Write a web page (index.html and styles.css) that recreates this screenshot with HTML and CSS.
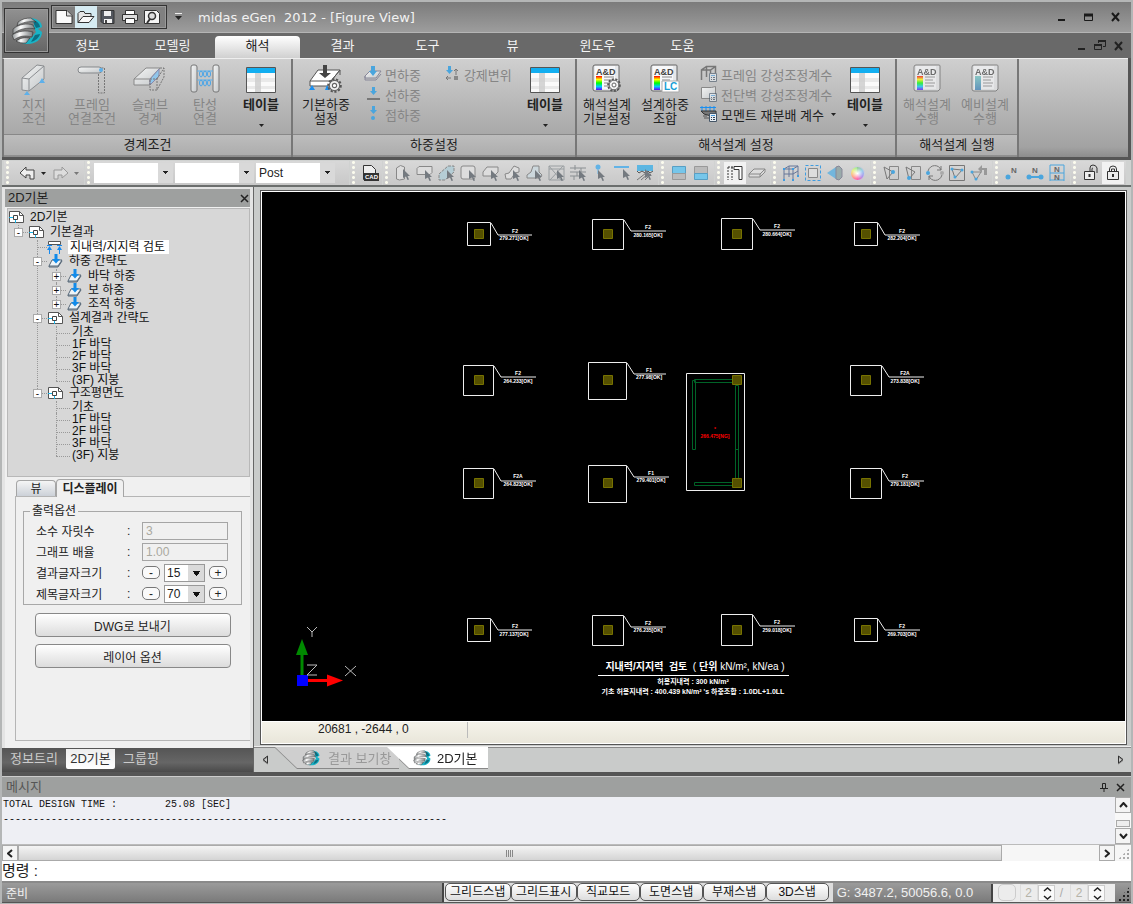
FILE: index.html
```html
<!DOCTYPE html>
<html lang="ko">
<head>
    <meta charset="utf-8">
    <title>midas eGen 2012 - [Figure View]</title>
    <link rel="stylesheet" href="styles.css">
</head>
<body>
    <!-- shared icons -->
    <svg class="defs" width="0" height="0">
        <linearGradient id="steel" x1="0" y1="0" x2="1" y2="1">
            <stop offset="0" stop-color="#f4f5f5"/><stop offset="1" stop-color="#c4c7c9"/>
        </linearGradient>
        <linearGradient id="band" x1="0" y1="0" x2="1" y2="0">
            <stop offset="0" stop-color="#8b9092"/><stop offset=".35" stop-color="#fff"/><stop offset="1" stop-color="#777c7e"/>
        </linearGradient>
        <linearGradient id="rainbow" x1="0" y1="0" x2="0" y2="1">
            <stop offset="0" stop-color="#f00"/><stop offset=".25" stop-color="#ff0"/><stop offset=".5" stop-color="#0f0"/><stop offset=".75" stop-color="#0cf"/><stop offset="1" stop-color="#60f"/>
        </linearGradient>
        <linearGradient id="teal" x1="0" y1="0" x2="0" y2="1">
            <stop offset="0" stop-color="#6fc6c4"/><stop offset="1" stop-color="#3c82bb"/>
        </linearGradient>
        <symbol id="logo" viewBox="0 0 32 28">
            <path d="M19 1c7 0 12 4 12 9l-4 2 4 3c0 7-6 12-14 12-4 0-7-1-9-3l12-3 5-6-3-6 2-3-8-3z" fill="#19b3c6"/>
            <path d="M22 3c4 1 7 4 7 7l-4 1-2-4zM29 17c-1 4-5 7-9 8l4-7z" fill="#0c6f83"/>
            <path d="M7 5c4-3 8-4 13-4l5 4C18 4 12 5 6 9z" fill="url(#band)" stroke="#333" stroke-width=".6"/>
            <path d="M2 12c6-5 14-6 20-4l2 4C16 10 8 12 2 17z" fill="url(#band)" stroke="#333" stroke-width=".6"/>
            <path d="M1 18c6-4 14-5 21-3l-1 5C14 18 8 19 3 23z" fill="url(#band)" stroke="#333" stroke-width=".6"/>
            <path d="M5 24c4-3 9-4 14-3l-4 5c-4 0-7 0-10-2z" fill="url(#band)" stroke="#333" stroke-width=".6"/>
        </symbol>
        <symbol id="table" viewBox="0 0 32 28">
            <path d="M1.500 1.500h29v25h-29z" fill="#fafafa" stroke="#555"/>
            <path d="M2 2h28v5H2z" fill="#12aef0"/>
            <path d="M2 12h28v4H2zM2 20h28v3H2z" fill="#e9e9e9"/>
            <path d="M10 7h6v19h-6z" fill="#ccc" opacity=".8"/>
        </symbol>
        <symbol id="gear" viewBox="0 0 14 14">
            <circle cx="7" cy="7" r="5.800" fill="none" stroke="#555" stroke-width="2" stroke-dasharray="2 1.500"/>
            <circle cx="7" cy="7" r="4.800" fill="#f2f2f2" stroke="#666"/>
            <circle cx="7" cy="7" r="2" fill="#fff" stroke="#666"/>
        </symbol>
        <symbol id="report" viewBox="0 0 28 28">
            <path d="M3 1h23q1 0 1 1v23l-2 2H3q-2 0-2-2V3q0-2 2-2z" fill="#e6e7e9" stroke="#666"/>
            <path d="M3 2h20v23H3z" fill="#f7f8fa"/>
            <path d="M12 13h10M12 16h8M12 19h10M12 22h9" stroke="#888" fill="none"/>
        </symbol>
        <symbol id="calc" viewBox="0 0 8 9">
            <path d="M.5.5h7v8h-7z" fill="#e8eef4" stroke="#456"/><path d="M2 2h4v1H2z" fill="#49d"/><path d="M2 4.500h1M4 4.500h2M2 6.500h1M4 6.500h2" stroke="#345"/>
        </symbol>
        <symbol id="plan" viewBox="0 0 15 12">
            <path d="M.5.5h10l4 4v7H.5z" fill="#fff" stroke="#555"/><path d="M10.500.5v4h4" fill="none" stroke="#555"/>
            <path d="M0 6.500h4M6.500 9v3" stroke="#1ab4e8"/><path d="M4.500 4.500h4v4h-4z" fill="#fff" stroke="#444"/>
        </symbol>
        <symbol id="load" viewBox="0 0 15 14">
            <path d="M4 6h10l-4 6H1z" fill="#eef4f8" stroke="#567"/><path d="M1 12v1h9l4-6" fill="none" stroke="#567"/>
            <path d="M6.500 0h3v5H12L8 9.500 4 5h2.500z" fill="#118bea"/>
        </symbol>
        <symbol id="cursor" viewBox="0 0 8 11">
            <path d="M0 0l7 7H4.500l1.500 3.500-1.500.5L3 7.500 0 9z" fill="#747a80"/>
        </symbol>
        <symbol id="down" viewBox="0 0 7 4"><path d="M0 0h7L3.500 4z" fill="#222"/></symbol>
    </svg>

    <header class="frame">
        <button class="app-button" aria-label="midas eGen"><svg width="32" height="28"><use href="#logo"/></svg></button>
        <div class="title-bar">
            <div class="quick">
                <button aria-label="New"><svg width="18" height="14"><path d="M1 .5h11l5 5v8H1z" fill="#fafafa" stroke="#333"/><path d="M11.500 1v5H17" fill="#ddd" stroke="#444"/></svg></button>
                <button class="on" aria-label="Open"><svg width="18" height="14"><path d="M1 12.500v-9l2-2h4l1 2h6v3" fill="#e5e5e5" stroke="#333"/><path d="M1 12.500l5-6h11l-5 6z" fill="#f8f8f8" stroke="#333"/></svg></button>
                <button aria-label="Save"><svg width="16" height="14"><path d="M1 .5h13v13H3l-2-2z" fill="#53575e" stroke="#333"/><path d="M4 1h7v5H4z" fill="#eee"/><path d="M4 9h8v4H4z" fill="#f4f4f4"/><path d="M5 10h2v3H5z" fill="#444"/></svg></button>
                <button aria-label="Print"><svg width="18" height="14"><path d="M4.500.5h9v4h-9z" fill="#fff" stroke="#333"/><path d="M1.500 4.500h15v6h-15z" fill="#ddd" stroke="#333"/><path d="M4.500 8.500h9v5h-9z" fill="#fff" stroke="#333"/></svg></button>
                <button aria-label="Preview"><svg width="18" height="14"><path d="M1.500.5h12l3 3v10h-15z" fill="#f4f4f4" stroke="#333"/><circle cx="9" cy="6" r="3.500" fill="#ddd" stroke="#333" stroke-width="1.500"/><path d="M7 9l-3 4" stroke="#333" stroke-width="2"/></svg></button>
            </div>
            <button class="more" aria-label="More"><svg width="7" height="8"><path d="M0 .5h7" stroke="#eee"/><path d="M0 3h7L3.500 7z" fill="#222"/></svg></button>
            <h1>midas eGen&nbsp; 2012 - [Figure View]</h1>
            <div class="window-buttons">
                <button aria-label="Minimize"><svg width="10" height="10"><path d="M1 8h7" stroke="#1a1a1a" stroke-width="2"/></svg></button>
                <button aria-label="Maximize"><svg width="10" height="10"><path d="M.5 2.500h8v6h-8z" fill="none" stroke="#1a1a1a"/><path d="M0 3h9" stroke="#1a1a1a" stroke-width="3"/></svg></button>
                <button aria-label="Close"><svg width="10" height="10"><path d="M1 1l7 8M8 1L1 9" stroke="#1a1a1a" stroke-width="2"/></svg></button>
            </div>
        </div>
        <nav class="menu">
            <a href="#">정보</a>
            <a href="#">모델링</a>
            <a href="#" class="on">해석</a>
            <a href="#">결과</a>
            <a href="#">도구</a>
            <a href="#">뷰</a>
            <a href="#">윈도우</a>
            <a href="#">도움</a>
            <div class="child-buttons">
                <button aria-label="Minimize view"><svg width="9" height="10"><path d="M1 8h7" stroke="#222" stroke-width="2"/></svg></button>
                <button aria-label="Restore view"><svg width="12" height="11"><path d="M4.500 3V.5h7v6H9" fill="none" stroke="#222"/><path d="M.5 4.500h7v5h-7z" fill="none" stroke="#222"/><path d="M4 1h8M0 5h8" stroke="#222" stroke-width="2"/></svg></button>
                <button aria-label="Close view"><svg width="10" height="10"><path d="M1 1l7 8M8 1L1 9" stroke="#222" stroke-width="2"/></svg></button>
            </div>
        </nav>
    </header>

    <div class="ribbon">
        <section class="group boundary">
            <div class="items">
                <button class="big" disabled><svg width="28" height="32"><path d="M2 14L17 1l7 1v13L9 27l-7-1z" fill="url(#steel)" stroke="#8a8d90"/><path d="M2 14l7 1v12M9 15L24 2" fill="none" stroke="#8a8d90"/><path d="M7 27l3 4H4zM22 14l3 5h-6z" fill="#5eb0ea"/></svg><span>지지<br>조건</span></button>
                <button class="big" disabled><svg width="30" height="32"><path d="M21.500 4v25h6V4z" fill="none" stroke="#777" stroke-dasharray="2 1"/><rect x="1" y="3" width="24" height="6" rx="3" fill="url(#steel)" stroke="#85888b"/><circle cx="24" cy="6" r="2" fill="#5eb0ea"/></svg><span>프레임<br>연결조건</span></button>
                <button class="big" disabled><svg width="34" height="32"><path d="M1 15L13 4h14L17 15v6H1z" fill="url(#steel)" stroke="#888"/><path d="M1 15h16" stroke="#888"/><path d="M17 15l9-10v7l-9 9z" fill="#8fc5ea" stroke="#88a"/><path d="M17 15h7v11h-7zM24 15l7-11v9l-7 13M27 4h4" fill="none" stroke="#777" stroke-dasharray="2 1"/></svg><span>슬래브<br>경계</span></button>
                <button class="big narrow" disabled><svg width="30" height="32"><rect x="1" y="1" width="6" height="27" rx="2" fill="url(#steel)" stroke="#777"/><rect x="23" y="1" width="6" height="27" rx="2" fill="url(#steel)" stroke="#777"/><path d="M7 7h16M7 16h16" stroke="#5eb0ea"/><g fill="none" stroke="#4aa5e8"><ellipse cx="11" cy="10" rx="1.500" ry="3"/><ellipse cx="15" cy="10" rx="1.500" ry="3"/><ellipse cx="19" cy="10" rx="1.500" ry="3"/><ellipse cx="11" cy="19" rx="1.500" ry="3"/><ellipse cx="15" cy="19" rx="1.500" ry="3"/><ellipse cx="19" cy="19" rx="1.500" ry="3"/></g></svg><span>탄성<br>연결</span></button>
                <button class="big strong"><svg width="32" height="32"><use href="#table" y="2" width="32" height="28"/></svg><span>테이블</span><svg class="arrow" width="5" height="3"><use href="#down"/></svg></button>
            </div>
            <h2>경계조건</h2>
        </section>
        <section class="group loads">
            <div class="items">
                <button class="big"><svg width="34" height="32"><path d="M1 17L9 6h22l-9 11v5H1z" fill="#fff" stroke="#555"/><path d="M1 17h21L31 6v5" fill="none" stroke="#555"/><path d="M3 21l3 5H0zM18 21l3 5h-5z" fill="#1a8ff0"/><path d="M14 1h4v8h4l-6 5-6-5h4z" fill="#444"/><use href="#gear" x="18" y="14" width="15" height="15"/></svg><span>기본하중<br>설정</span></button>
                <div class="stack">
                    <button disabled><svg width="18" height="16"><path d="M1 10l5-5h11l-5 7H1z" fill="url(#steel)" stroke="#889"/><path d="M1 10v4h11l5-6" fill="none" stroke="#889"/><path d="M7 0h4v5h2l-4 5-4-5h2z" fill="#4aa5dd"/></svg>면하중</button>
                    <button disabled><svg width="18" height="16"><path d="M8 1h3v4h2l-3.500 4L6 5h2z" fill="#4aa5dd"/><path d="M3 13h13" stroke="#777" stroke-width="2"/></svg>선하중</button>
                    <button disabled><svg width="18" height="16"><path d="M8 0h3v4h2l-3.500 4L6 4h2z" fill="#4aa5dd"/><circle cx="9" cy="12" r="2" fill="#4aa5dd"/></svg>점하중</button>
                </div>
                <div class="stack second">
                    <button disabled><svg width="16" height="16"><path d="M3 0h3v4h2L4.500 8 1 4h2z" fill="#4aa5dd"/><path d="M1 12h5M3 10l-2 2 2 2M11 3v6M9 5l2-2 2 2" fill="none" stroke="#777"/><path d="M9 10h4v4H9z" fill="#888"/></svg>강제변위</button>
                </div>
                <button class="big strong"><svg width="32" height="32"><use href="#table" y="2" width="32" height="28"/></svg><span>테이블</span><svg class="arrow" width="5" height="3"><use href="#down"/></svg></button>
            </div>
            <h2>하중설정</h2>
        </section>
        <section class="group design">
            <div class="items">
                <button class="big"><svg width="30" height="32"><use href="#report" width="28" height="28"/><text x="4" y="11" class="icon-label">A&amp;D</text><path d="M4 12h6v14H4z" fill="url(#rainbow)"/><use href="#gear" x="15" y="14" width="14" height="14"/></svg><span>해석설계<br>기본설정</span></button>
                <button class="big"><svg width="30" height="32"><use href="#report" width="28" height="28"/><text x="4" y="11" class="icon-label">A&amp;D</text><path d="M4 12h6v14H4z" fill="url(#rainbow)"/><path d="M12 17h17v11H12z" fill="#fff" stroke="#aaa"/><text x="14" y="26" class="lc-label">LC</text></svg><span>설계하중<br>조합</span></button>
                <div class="stack wide">
                    <button disabled><svg width="18" height="18"><path d="M1.500 15V5l5-3.500h9V8M1.500 5h9l5-3.500M6.500 1.500V12M10.500 5v3" fill="none" stroke="#777" stroke-width="1.500"/><use href="#calc" x="9" y="8" width="8" height="9" opacity=".6"/></svg>프레임 강성조정계수</button>
                    <button disabled><svg width="18" height="18"><path d="M1.500 2.500h10l4-1v12h-14z" fill="url(#steel)" stroke="#888"/><use href="#calc" x="9" y="8" width="8" height="9" opacity=".6"/></svg>전단벽 강성조정계수</button>
                    <button><svg width="18" height="18"><path d="M2 1v5M6 1v5M10 1v5M14 1v5M0 2.500h16" stroke="#1a8ff0"/><path d="M1 6h15v3l-5 2L4 9z" fill="#777" stroke="#333"/><path d="M3 11h4M4 13h5" stroke="#555"/><use href="#calc" x="9" y="8" width="8" height="9"/></svg>모멘트 재분배 계수<svg class="arrow" width="5" height="3"><use href="#down"/></svg></button>
                </div>
                <button class="big strong"><svg width="32" height="32"><use href="#table" y="2" width="32" height="28"/></svg><span>테이블</span><svg class="arrow" width="5" height="3"><use href="#down"/></svg></button>
            </div>
            <h2>해석설계 설정</h2>
        </section>
        <section class="group run">
            <div class="items">
                <button class="big" disabled><svg width="28" height="32"><g opacity=".7"><use href="#report" width="28" height="28"/><text x="4" y="11" class="icon-label">A&amp;D</text><path d="M4 12h6v14H4z" fill="url(#rainbow)"/></g></svg><span>해석설계<br>수행</span></button>
                <button class="big" disabled><svg width="28" height="32"><g opacity=".7"><use href="#report" width="28" height="28"/><text x="4" y="11" class="icon-label">A&amp;D</text><path d="M4 12h6v14H4z" fill="url(#teal)"/></g></svg><span>예비설계<br>수행</span></button>
            </div>
            <h2>해석설계 실행</h2>
        </section>
    </div>

    <div class="toolbar">
        <div class="tools history">
            <button aria-label="Undo"><svg width="17" height="14"><path d="M1 7l6-6v3h8v9h-4V9H7v3z" fill="#eee" stroke="#444"/></svg></button>
            <svg width="5" height="3"><use href="#down"/></svg>
            <button aria-label="Redo"><svg width="17" height="14"><path d="M16 7l-6-6v3H2v9h4V9h4v3z" fill="#ddd" stroke="#999"/></svg></button>
            <svg width="5" height="3" opacity=".5"><use href="#down"/></svg>
        </div>
        <div class="tools combos">
            <select aria-label="Case"><option></option></select>
            <select aria-label="Combination"><option></option></select>
            <select aria-label="Mode"><option>Post</option></select>
        </div>
        <div class="tools cad">
            <button aria-label="CAD"><svg width="18" height="18"><path d="M2.500 1.500h8l4 4v10h-12z" fill="#eee" stroke="#333"/><path d="M3 9h15v8H3z" fill="#333"/><text x="4" y="15" class="cad-label">CAD</text></svg></button>
        </div>
        <div class="tools">
            <button aria-label="Select column"><svg width="18" height="18"><path d="M2.500 4l4-2.500 4 1.500v12l-5 1-3-1z" fill="#ddd" stroke="#888"/><use href="#cursor" x="9" y="5" width="8" height="11"/></svg></button>
            <button aria-label="Select beam"><svg width="18" height="18"><path d="M1 4.500l2-2h13v6l-2 2H1z" fill="#ddd" stroke="#888"/><use href="#cursor" x="9" y="6" width="8" height="11"/></svg></button>
            <button aria-label="Select wall"><svg width="18" height="18"><path d="M1 10l9-8h6v6l-9 8H1z" fill="#b5cdd5" stroke="#888" stroke-dasharray="3 1"/><use href="#cursor" x="9" y="6" width="8" height="11"/></svg></button>
            <button aria-label="Select plate"><svg width="18" height="18"><rect x="1" y="2" width="14" height="13" rx="2" fill="#ddd" stroke="#888"/><use href="#cursor" x="9" y="6" width="8" height="11"/></svg></button>
            <button aria-label="Select slab"><svg width="18" height="18"><path d="M1 8l4-5h11v5l-4 4H1z" fill="#ddd" stroke="#888"/><use href="#cursor" x="9" y="6" width="8" height="11"/></svg></button>
            <button aria-label="Select stair"><svg width="18" height="18"><path d="M1 10l4-1 5-7 5 2v4l-4 1-4 6H2z" fill="#ddd" stroke="#888"/><use href="#cursor" x="9" y="6" width="8" height="11"/></svg></button>
            <button aria-label="Select footing"><svg width="18" height="18"><path d="M1 11l4-3 2-6h6v6l3 3-2 3H1z" fill="#ccd7dc" stroke="#888"/><use href="#cursor" x="9" y="6" width="8" height="11"/></svg></button>
            <button aria-label="Select brace"><svg width="18" height="18"><path d="M1 2h15v14H1zM1 2l12 14M15 2L2 16M1 5h15" fill="none" stroke="#999ea1"/><use href="#cursor" x="9" y="6" width="8" height="11"/></svg></button>
            <button aria-label="Select lines"><svg width="18" height="18"><path d="M0 4h16M0 8h16M0 12h10M5 1v5M11 4v4M7 8v4M4 12v4" fill="none" stroke="#8a8f92"/><use href="#cursor" x="9" y="6" width="8" height="11"/></svg></button>
            <button aria-label="Select node"><svg width="18" height="18"><circle cx="6" cy="3" r="2.500" fill="#62b3e6"/><path d="M6 5v5" stroke="#62b3e6"/><use href="#cursor" x="6" y="6" width="8" height="11"/></svg></button>
            <button aria-label="Select edge"><svg width="18" height="18"><path d="M0 3h15" stroke="#62b3e6" stroke-width="2"/><use href="#cursor" x="9" y="5" width="8" height="11"/></svg></button>
            <button aria-label="Select soil"><svg width="18" height="18"><path d="M1 1h16v6H1z" fill="#5cb6e2"/><path d="M1 7l2 2 3-2 3 2 3-2 2 2 3-2" stroke="#555" fill="none"/><path d="M1 16L10 9M5 16l8-7M9 16l6-6" stroke="#777"/><use href="#cursor" x="9" y="5" width="8" height="11"/></svg></button>
        </div>
        <div class="tools">
            <button aria-label="Top half"><svg width="16" height="16"><path d="M1.500 1.500h13v7h-13z" fill="#76c6ea" stroke="#579fc4"/><path d="M1.500 8.500h13v6h-13z" fill="#bbb" stroke="#999"/></svg></button>
            <button aria-label="Bottom half"><svg width="16" height="16"><path d="M1.500 1.500h13v7h-13z" fill="#bbb" stroke="#999"/><path d="M1.500 8.500h13v6h-13z" fill="#76c6ea" stroke="#579fc4"/></svg></button>
        </div>
        <div class="tools">
            <button class="on" aria-label="Frame"><svg width="18" height="18"><path d="M2 3v13M6 3v13M2 3h9" fill="none" stroke="#333" stroke-dasharray="2 1"/><path d="M8 2.500h8v13h-3v-10H8z" fill="#fff" stroke="#333"/></svg></button>
            <button aria-label="Slab"><svg width="18" height="18"><path d="M1 10l5-5h11l-5 5zM1 10v3h11v-3M12 13l5-5V5" fill="#ddd" stroke="#888"/></svg></button>
        </div>
        <div class="tools">
            <button aria-label="Model"><svg width="18" height="18"><path d="M2 16V5l5-3h9v10M2 5h9v11M11 5l5-3M7 2v11M2 10h9l5-3" fill="none" stroke="#679"/><path d="M1 15h2v2H1zM10 15h2v2h-2zM15 11h2v2h-2zM1 4h2v2H1zM10 4h2v2h-2z" fill="#3f9ce0"/></svg></button>
            <button aria-label="Fit"><svg width="18" height="18"><path d="M4.500 4.500h9v9h-9z" fill="#ddd" stroke="#888"/><path d="M1.500 1.500h15v15h-15z" fill="none" stroke="#3f9ce0" stroke-dasharray="3 2"/></svg></button>
            <button aria-label="Perspective"><svg width="18" height="18"><path d="M1 9l9-6v12z" fill="#72b6dd"/><path d="M10 3l3-1 3 3v8l-3 3-3-1z" fill="#9aa" stroke="#889"/></svg></button>
            <button aria-label="Colour"><span class="colour-wheel"></span></button>
        </div>
        <div class="tools">
            <button aria-label="Copy in"><svg width="18" height="18"><path d="M7.500 2.500h9v13h-9z" fill="none" stroke="#888"/><path d="M2 3l3 12L11 8z" fill="none" stroke="#777"/><circle cx="11" cy="8" r="2" fill="#4aa5dd"/></svg></button>
            <button aria-label="Copy out"><svg width="18" height="18"><path d="M7.500 2.500h9v13h-9z" fill="none" stroke="#888"/><path d="M2 3l3 12L11 8z" fill="none" stroke="#777"/><circle cx="5" cy="14" r="2" fill="#4aa5dd"/></svg></button>
            <button aria-label="Swap"><svg width="18" height="18"><path d="M2 7c2-7 11-7 13-1M16 11c-2 7-11 7-13 1M15 2v4h-4M3 16v-4h4" fill="none" stroke="#777"/><circle cx="2" cy="9" r="2" fill="#4aa5dd"/><circle cx="16" cy="9" r="2" fill="#aaa"/></svg></button>
            <button aria-label="Box"><svg width="18" height="18"><path d="M1.500 1.500h15v15h-15z" fill="none" stroke="#777"/><path d="M4 5l3 9 7-8z" fill="none" stroke="#777"/><circle cx="4" cy="5" r="1.500" fill="#4aa5dd"/><circle cx="7" cy="13" r="1.500" fill="#4aa5dd"/><circle cx="14" cy="6" r="1.500" fill="#4aa5dd"/></svg></button>
            <button aria-label="Return"><svg width="18" height="18"><path d="M2 8l4 8 5-8z" fill="none" stroke="#888"/><circle cx="2" cy="8" r="1.500" fill="#4aa5dd"/><circle cx="6" cy="15" r="1.500" fill="#4aa5dd"/><path d="M8 5l4-4v3h5v7h-3V6h-2v3z" fill="#999"/></svg></button>
        </div>
        <div class="tools">
            <button aria-label="Node number"><svg width="18" height="18"><circle cx="4" cy="13" r="2.500" fill="#4aa5dd"/><text x="7" y="9" class="n-label">N</text></svg></button>
            <button aria-label="Element number"><svg width="18" height="18"><path d="M3 13h12" stroke="#4aa5dd" stroke-width="2"/><circle cx="3" cy="13" r="2.500" fill="#4aa5dd"/><circle cx="15" cy="13" r="2.500" fill="#4aa5dd"/><text x="6" y="9" class="n-label">N</text></svg></button>
            <button aria-label="Both numbers"><svg width="18" height="18"><path d="M2 1v16M16 1v16M2 1h14M2 9h14M2 16h14" stroke="#4aa5dd"/><text x="6" y="8" class="n-label">N</text><text x="6" y="16" class="n-label">N</text></svg></button>
        </div>
        <div class="tools last">
            <button aria-label="Unlock"><svg width="18" height="18"><path d="M2.500 7.500h10v8h-10z" fill="#eee" stroke="#333"/><path d="M8 7V4q0-3 3-3t4 3v5M10 7V5q0-1 1-1" fill="none" stroke="#333"/><path d="M7.500 10v3" stroke="#333" stroke-width="2"/></svg></button>
            <button class="on" aria-label="Lock"><svg width="16" height="18"><path d="M2.500 7.500h11v8h-11z" fill="#eee" stroke="#333"/><path d="M4.500 7V5q0-3 3.500-3t3.500 3v2M6.500 7V5h3v2" fill="none" stroke="#333"/><path d="M8 10v3" stroke="#333" stroke-width="2"/></svg></button>
        </div>
    </div>

    <main>
        <aside>
            <div class="panel">
                <div class="panel-title"><h2>2D기본</h2><button aria-label="Close panel"><svg width="9" height="9"><path d="M1 1l7 7M8 1L1 8" stroke="#222" stroke-width="1.500"/></svg></button></div>
                <div class="tree">
                    <ul class="root">
                        <li><div class="row"><svg width="15" height="12"><use href="#plan"/></svg><span>2D기본</span></div>
                            <ul>
                                <li><div class="row"><button aria-label="Collapse">-</button><svg width="15" height="12"><use href="#plan"/></svg><span>기본결과</span></div>
                                    <ul>
                                        <li><div class="row no-toggle"><svg width="15" height="13"><path d="M1.500.5h12v3h-12z" fill="#fff" stroke="#555"/><path d="M0 4.500h5M10 4.500h5M2.500 6v7M12.500 6v7" stroke="#168af0"/><path d="M2.500 5L0 9h5zM12.500 5L10 9h5z" fill="#168af0"/></svg><span class="selected">지내력/지지력 검토</span></div></li>
                                        <li><div class="row"><button aria-label="Collapse">-</button><svg width="15" height="14"><use href="#load"/></svg><span>하중 간략도</span></div>
                                            <ul>
                                                <li><div class="row"><button aria-label="Expand">+</button><svg width="15" height="14"><use href="#load"/></svg><span>바닥 하중</span></div></li>
                                                <li><div class="row"><button aria-label="Expand">+</button><svg width="15" height="14"><use href="#load"/></svg><span>보 하중</span></div></li>
                                                <li><div class="row"><button aria-label="Expand">+</button><svg width="15" height="14"><use href="#load"/></svg><span>조적 하중</span></div></li>
                                            </ul>
                                        </li>
                                        <li><div class="row"><button aria-label="Collapse">-</button><svg width="15" height="12"><use href="#plan"/></svg><span>설계결과 간략도</span></div>
                                            <ul class="floors">
                                                <li>기초</li>
                                                <li>1F 바닥</li>
                                                <li>2F 바닥</li>
                                                <li>3F 바닥</li>
                                                <li>(3F) 지붕</li>
                                            </ul>
                                        </li>
                                        <li><div class="row"><button aria-label="Collapse">-</button><svg width="15" height="12"><use href="#plan"/></svg><span>구조평면도</span></div>
                                            <ul class="floors">
                                                <li>기초</li>
                                                <li>1F 바닥</li>
                                                <li>2F 바닥</li>
                                                <li>3F 바닥</li>
                                                <li>(3F) 지붕</li>
                                            </ul>
                                        </li>
                                    </ul>
                                </li>
                            </ul>
                        </li>
                    </ul>
                </div>
                <div class="sub-tabs"><button>뷰</button><button class="on">디스플레이</button></div>
                <div class="options">
                    <fieldset>
                        <legend>출력옵션</legend>
                        <div class="field"><label for="decimals">소수 자릿수</label><i>:</i><input id="decimals" type="text" value="3" disabled></div>
                        <div class="field"><label for="scale">그래프 배율</label><i>:</i><input id="scale" type="text" value="1.00" disabled></div>
                        <div class="field"><label for="result-size">결과글자크기</label><i>:</i><button class="step">-</button><select id="result-size"><option>15</option></select><button class="step">+</button></div>
                        <div class="field"><label for="title-size">제목글자크기</label><i>:</i><button class="step">-</button><select id="title-size"><option>70</option></select><button class="step">+</button></div>
                    </fieldset>
                    <button class="wide-button">DWG로 보내기</button>
                    <button class="wide-button">레이어 옵션</button>
                </div>
            </div>
            <div class="side-tabs"><button>정보트리</button><button class="on">2D기본</button><button>그룹핑</button></div>
        </aside>

        <section class="view">
            <div class="view-frame">
                <svg class="drawing" viewBox="262 192 863 529" preserveAspectRatio="xMinYMin meet">
                    <defs>
                        <path id="column" d="M-4.500-4.500h9v9h-9z" fill="#555000" stroke="#777200"/>
                    </defs>
                    <g class="footing">
                        <path d="M467.500 222.500h23v23h-23zM491 223l7 12h34"/>
                        <path d="M592.500 219.500h31v30h-31zM624 220l7 11h35"/>
                        <path d="M721.500 218.500h31v31h-31zM753 219l7 11h35"/>
                        <path d="M854.500 222.500h23v23h-23zM878 223l7 12h35"/>
                        <path d="M463.500 365.500h30v30h-30zM494 366l7 11h35"/>
                        <path d="M588.500 362.500h38v37h-38zM627 363l7 11h32"/>
                        <path d="M850.500 365.500h31v30h-31zM882 366l7 11h35"/>
                        <path d="M463.500 468.500h30v30h-30zM494 469l7 12h35"/>
                        <path d="M588.500 465.500h38v37h-38zM627 466l7 11h35"/>
                        <path d="M850.500 468.500h31v30h-31zM882 469l7 12h35"/>
                        <path d="M467.500 618.500h23v23h-23zM491 619l7 11h34"/>
                        <path d="M592.500 615.500h31v30h-31zM624 616l7 11h35"/>
                        <path d="M721.500 614.500h31v31h-31zM753 615l7 11h35"/>
                        <path d="M854.500 618.500h23v23h-23zM878 619l7 11h35"/>
                        <path d="M686.500 373.500h58v117h-58z"/>
                    </g>
                    <g class="wall">
                        <path d="M692.500 380.500h3v69h-3zM694.500 379.500h39v3h-39zM735.500 385.500h3v94h-3zM735.500 449.500h3M694.500 482.500h39v3h-39z"/>
                    </g>
                    <use href="#column" x="479" y="234"/><use href="#column" x="608" y="234"/><use href="#column" x="737" y="234"/><use href="#column" x="866" y="234"/>
                    <use href="#column" x="479" y="380"/><use href="#column" x="608" y="380"/><use href="#column" x="737" y="380"/><use href="#column" x="866" y="380"/>
                    <use href="#column" x="479" y="483"/><use href="#column" x="608" y="483"/><use href="#column" x="737" y="483"/><use href="#column" x="866" y="483"/>
                    <use href="#column" x="479" y="630"/><use href="#column" x="608" y="630"/><use href="#column" x="737" y="630"/><use href="#column" x="866" y="630"/>
                    <g class="mark">
                        <text x="515" y="233">F2</text><text x="514" y="240">279.271[OK]</text>
                        <text x="648" y="229">F2</text><text x="648" y="237">280.165[OK]</text>
                        <text x="777" y="228">F2</text><text x="777" y="236">280.664[OK]</text>
                        <text x="902" y="233">F2</text><text x="902" y="240">282.204[OK]</text>
                        <text x="518" y="375">F2</text><text x="518" y="383">264.233[OK]</text>
                        <text x="649" y="372">F1</text><text x="649" y="379">277.98[OK]</text>
                        <text x="905" y="375">F2A</text><text x="905" y="383">273.838[OK]</text>
                        <text x="518" y="478">F2A</text><text x="518" y="486">264.823[OK]</text>
                        <text x="651" y="475">F1</text><text x="651" y="482">279.401[OK]</text>
                        <text x="905" y="478">F2</text><text x="905" y="486">279.181[OK]</text>
                        <text x="515" y="628">F2</text><text x="514" y="636">277.137[OK]</text>
                        <text x="648" y="625">F2</text><text x="648" y="632">276.235[OK]</text>
                        <text x="777" y="624">F2</text><text x="777" y="632">259.018[OK]</text>
                        <text x="902" y="628">F2</text><text x="902" y="636">269.703[OK]</text>
                        <text class="fail" x="715" y="431">*</text><text class="fail" x="715" y="438">266.475[NG]</text>
                    </g>
                    <g class="caption">
                        <text class="heading" x="695" y="670"><tspan class="korean">지내력/지지력&#160; 검토</tspan>&#160; ( <tspan class="korean">단위</tspan> kN/m², kN/ea )</text>
                        <path d="M598 675.500h191" stroke="#fff"/>
                        <text x="693" y="684">허용지내력 : 300 kN/m²</text>
                        <text x="693" y="694">기초 허용지내력 : 400.439 kN/m² 's 하중조합 : 1.0DL+1.0LL</text>
                    </g>
                    <g class="axes">
                        <path d="M302 676v-22" stroke="#008a00" stroke-width="3"/><path d="M302 639l6 16h-12z" fill="#008a00"/>
                        <path d="M306 680.500h22" stroke="#f00" stroke-width="3"/><path d="M343 680.500l-16-6v12z" fill="#f00"/>
                        <path d="M297 675h11v11h-11z" fill="#00f"/>
                        <path d="M307 627l5 5 5-5M312 632v5M307 665h10l-10 10h10M345 666l11 10M356 666l-11 10" fill="none" stroke="#bbb"/>
                    </g>
                </svg>
                <div class="coords"><span>20681 , -2644 , 0</span></div>
            </div>
            <div class="view-tabs">
                <button class="scroll" aria-label="Previous"><svg width="6" height="9"><path d="M5.500 1v7L1 4.500z" fill="none" stroke="#333"/></svg></button>
                <button class="view-tab"><svg width="18" height="16"><use href="#logo"/></svg>결과 보기창</button>
                <button class="view-tab on"><svg width="18" height="16"><use href="#logo"/></svg>2D기본</button>
                <button class="scroll next" aria-label="Next"><svg width="6" height="9"><path d="M.5 1v7L5 4.500z" fill="none" stroke="#333"/></svg></button>
            </div>
        </section>
    </main>

    <section class="messages">
        <div class="message-title"><h2>메시지</h2>
            <button aria-label="Pin"><svg width="8" height="9"><path d="M2.500.5h3v5h-3zM0 5.500h8M4 6v3" fill="none" stroke="#222"/></svg></button>
            <button aria-label="Close messages"><svg width="9" height="9"><path d="M1 1l7 7M8 1L1 8" stroke="#222" stroke-width="1.500"/></svg></button>
        </div>
        <div class="log">
            <pre>TOTAL DESIGN TIME :        25.08 [SEC]
--------------------------------------------------------------------------</pre>
            <div class="v-scroll">
                <button aria-label="Up"><svg width="9" height="6"><path d="M1 5l3.500-4L8 5" fill="none" stroke="#222" stroke-width="2"/></svg></button>
                <span></span>
                <button aria-label="Down"><svg width="9" height="6"><path d="M1 1l3.500 4L8 1" fill="none" stroke="#222" stroke-width="2"/></svg></button>
            </div>
        </div>
        <div class="h-scroll">
            <button aria-label="Left"><svg width="6" height="9"><path d="M5 1L1 4.500 5 8" fill="none" stroke="#222" stroke-width="2"/></svg></button>
            <div class="track"><div class="thumb"><svg width="8" height="7"><path d="M.5 0v7M2.500 0v7M4.500 0v7M6.500 0v7" stroke="#888"/></svg></div></div>
            <button aria-label="Right"><svg width="6" height="9"><path d="M1 1l4 3.500L1 8" fill="none" stroke="#222" stroke-width="2"/></svg></button>
            <span class="grip-corner"></span>
        </div>
        <div class="command"><label for="command">명령 :</label><input id="command" type="text"></div>
    </section>

    <footer>
        <span class="ready">준비</span>
        <div class="snaps">
            <button>그리드스냅</button><button>그리드표시</button><button>직교모드</button><button>도면스냅</button><button>부재스냅</button><button>3D스냅</button>
        </div>
        <output>G: 3487.2, 50056.6, 0.0</output>
        <div class="pages">
            <button class="blank" disabled aria-label="Page"></button>
            <input type="text" value="2" disabled aria-label="From"><span class="spin"><svg width="9" height="14"><path d="M1 5l3.500-3L8 5M1 10l3.500 3L8 10" fill="none" stroke="#222" stroke-width="1.500"/></svg></span>
            <b>/</b>
            <input type="text" value="2" disabled aria-label="To"><span class="spin"><svg width="9" height="14"><path d="M1 5l3.500-3L8 5M1 10l3.500 3L8 10" fill="none" stroke="#222" stroke-width="1.500"/></svg></span>
        </div>
        <span class="grip-corner dark"></span>
    </footer>
</body>
</html>
```
FILE: styles.css
```css
* {
    box-sizing: border-box;
}
body {
    margin: 0;
    height: 100vh;
    padding: 2px 2px 1px;
    display: flex;
    flex-direction: column;
    background-color: #b4b6b6;
    font-family: "Liberation Sans", "Noto Sans CJK KR", sans-serif;
    font-size: 12px;
    color: #222;
    overflow: hidden;
}
h1, h2, ul, pre {
    margin: 0;
    padding: 0;
    font-weight: normal;
}
button, input, select {
    font: inherit;
    color: inherit;
    margin: 0;
    padding: 0;
    border: 0;
    border-radius: 0;
    background: none;
}
button {
    white-space: nowrap;
}
button svg {
    display: block;
    flex: none;
}
.defs {
    position: absolute;
}
.icon-label, .lc-label, .n-label, .cad-label {
    font-family: "Liberation Sans", sans-serif;
    font-weight: bold;
    font-size: 9px;
    fill: #444;
}
.lc-label {
    font-size: 10px;
    fill: #189fd6;
}
.n-label {
    font-size: 8px;
    fill: #666;
}
.cad-label {
    font-size: 6px;
    fill: #fff;
}

/* title bar and menu */
.frame {
    position: relative;
    flex: none;
    background-color: #696969;
}
.title-bar {
    height: 31px;
    padding-left: 49px;
    display: flex;
    align-items: center;
    background: linear-gradient(#7b7b7b, #9d9d9d);
    border-bottom: 1px solid #b5b5b5;
}
.app-button {
    position: absolute;
    left: 2px;
    top: 6px;
    width: 45px;
    height: 45px;
    display: flex;
    align-items: center;
    justify-content: center;
    background: linear-gradient(#919191, #656565);
    border: 1px solid #333;
    box-shadow: inset 0 0 0 1px #999;
}
.quick {
    display: flex;
    height: 24px;
    padding: 0 3px 0 1px;
    border: 1px solid #333;
    background-color: #808080;
    box-shadow: inset 0 0 0 1px #999;
}
.quick button {
    width: 22px;
    display: flex;
    align-items: center;
    justify-content: center;
}
.quick button.on {
    background-color: #d6ebf2;
}
.more {
    margin: 0 16px 0 8px;
}
h1 {
    flex: 1;
    font-family: "DejaVu Sans", sans-serif;
    font-size: 13px;
    color: #f2f2f2;
}
.window-buttons, .child-buttons {
    display: flex;
    align-items: center;
}
.window-buttons {
    gap: 17px;
    padding-right: 10px;
}
.child-buttons {
    margin-left: auto;
    gap: 8px;
    padding-right: 7px;
}
.menu {
    height: 25px;
    padding-left: 43px;
    display: flex;
}
.menu a {
    width: 85px;
    padding-top: 3px;
    line-height: 20px;
    text-align: center;
    text-decoration: none;
    font-size: 13px;
    color: #f5f5f5;
}
.menu a.on {
    margin-top: 3px;
    padding-top: 0;
    color: #222;
    background: linear-gradient(#fff, #d0d0d0);
    border-radius: 4px 4px 0 0;
}

/* ribbon */
.ribbon {
    flex: none;
    height: 99px;
    margin-right: 3px;
    display: flex;
    background: linear-gradient(#cfcfcf, #a2a2a2 90%, #8c8c8c);
    border-top: 1px solid #eee;
    border-left: 2px solid #777;
    box-shadow: 0 0 0 3px #555;
    clip-path: inset(0 -3px -3px 0);
}
.group {
    display: flex;
    flex-direction: column;
    border-right: 2px solid #777;
    padding-bottom: 2px;
}
.items {
    flex: 1;
    display: flex;
    align-items: flex-start;
    padding: 5px 1px 0;
}
.group h2 {
    height: 21px;
    line-height: 20px;
    border-top: 1px solid #888;
    text-align: center;
    font-size: 13px;
    background: linear-gradient(#bdbdbd, #adadad);
}
.boundary {
    width: 289px;
}
.loads {
    width: 284px;
}
.design {
    width: 320px;
}
.run {
    width: 122px;
}
.big {
    width: 58px;
    display: flex;
    flex-direction: column;
    align-items: center;
    font-size: 13px;
    line-height: 14px;
}
.big.narrow {
    width: 52px;
}
.big.strong {
    width: 58px;
    font-weight: bold;
    margin-left: auto;
}
.big span {
    margin-top: 2px;
}
.loads .big:first-child {
    width: 64px;
}
.ribbon button:disabled {
    color: #858585;
}
.big .arrow {
    margin-top: 12px;
}
.stack {
    margin-left: 6px;
    display: flex;
    flex-direction: column;
    font-size: 13px;
}
.stack.second {
    margin-left: 24px;
}
.stack button {
    display: flex;
    align-items: center;
    gap: 3px;
    height: 20px;
}
.stack .arrow {
    margin-left: 4px;
}
.design .big {
    width: 58px;
}

/* toolbar */
.toolbar {
    flex: none;
    height: 27px;
    margin-top: 3px;
    padding: 1px 0 0 2px;
    display: flex;
    gap: 1px;
    background-color: #d0d2d1;
    border-bottom: 2px solid #6b6e6d;
    overflow: hidden;
}
.tools {
    display: flex;
    align-items: center;
    padding: 0 2px 0 9px;
    background: radial-gradient(circle, #fbfbee 1px, transparent 2px) 1px 4px / 5px 5px repeat-y, linear-gradient(#d8d8d8, #c8c8c8);
}
.tools button {
    width: 22px;
    height: 22px;
    display: flex;
    align-items: center;
    justify-content: center;
}
.tools button.on {
    background-color: #f2f2f2;
}
.history {
    width: 80px;
}
.history button {
    width: 28px;
}
.combos {
    width: 264px;
    gap: 2px;
}
.combos select {
    width: 79px;
    height: 20px;
}
.cad {
    width: 32px;
}
select {
    appearance: none;
    padding-left: 3px;
    background: linear-gradient(#222, #222) right 5px top 8px / 5px 1px no-repeat, linear-gradient(#222, #222) right 6px top 9px / 3px 1px no-repeat, linear-gradient(#222, #222) right 7px top 10px / 1px 1px no-repeat, linear-gradient(#d9d9d9, #d9d9d9) right / 15px 100% no-repeat, #fff;
    font-size: 12px;
}
.colour-wheel {
    width: 15px;
    height: 15px;
    border-radius: 50%;
    border: 1px solid #ccd;
    background: radial-gradient(circle, #fff, transparent 60%), conic-gradient(#9c9, #9ce, #a9e, #f6a, #fa8, #ee8, #9e9);
}

/* left side */
main {
    flex: 1;
    min-height: 0;
    display: flex;
    background-color: #e4e4e4;
    border-bottom: 4px solid #555;
}
aside {
    width: 252px;
    flex: none;
    display: flex;
    flex-direction: column;
    border-right: 1px solid #666;
}
.panel {
    flex: 1;
    min-height: 0;
    display: flex;
    flex-direction: column;
    margin: 2px 3px 0;
    background-color: #f0f0f0;
}
.panel-title {
    flex: none;
    height: 18px;
    display: flex;
    align-items: center;
    justify-content: space-between;
    padding: 0 1px 0 3px;
    background-color: #9ea09f;
}
.panel-title h2, .message-title h2 {
    font-size: 13px;
    line-height: 16px;
}
.tree {
    flex: 276;
    margin: 1px 0 0 2px;
    padding: 1px 0 0 1px;
    background-color: #d7d7d7;
    border: 1px solid #b8b8b8;
    line-height: 14px;
    color: #111;
    overflow: hidden;
}
.tree ul {
    list-style: none;
}
.tree ul ul {
    margin-left: 5px;
    padding-top: 1px;
}
.tree ul ul ul {
    margin-left: 19px;
}
.tree li {
    position: relative;
}
.tree ul ul li::before {
    content: "";
    position: absolute;
    left: 4px;
    top: 0;
    bottom: 0;
    border-left: 1px dotted #999;
}
.tree ul ul li:last-child::before {
    bottom: auto;
    height: 7px;
}
.tree ul ul li::after {
    content: "";
    position: absolute;
    left: 4px;
    top: 7px;
    width: 10px;
    border-top: 1px dotted #999;
}
.row {
    height: 14px;
    display: flex;
    align-items: center;
    gap: 6px;
}
.row svg {
    flex: none;
}
.row button {
    position: relative;
    z-index: 1;
    width: 9px;
    height: 9px;
    line-height: 7px;
    text-align: center;
    background-color: #fff;
    border: 1px solid #aaa;
    font-size: 10px;
}
.no-toggle {
    padding-left: 14px;
}
.selected {
    background-color: #fff;
    padding: 0 4px 0 2px;
}
.tree ul.floors li {
    height: 12px;
    line-height: 12px;
    padding-left: 20px;
}
.tree ul.floors li::after {
    width: 14px;
}
.sub-tabs {
    flex: none;
    display: flex;
    align-items: flex-end;
    padding-left: 11px;
    height: 19px;
}
.sub-tabs button {
    width: 40px;
    height: 16px;
    line-height: 14px;
    border: 1px solid #a5a5a5;
    border-bottom: 0;
    border-radius: 4px 4px 0 0;
    background: linear-gradient(#f5f5f5, #ccd1d8);
}
.sub-tabs button.on {
    width: 68px;
    height: 18px;
    font-weight: bold;
    background: #f0f0f0;
    margin-bottom: -1px;
    position: relative;
}
.options {
    flex: 244;
    display: flex;
    flex-direction: column;
    align-items: center;
    margin: 0 0 7px 10px;
    border: 1px solid #b5b5b5;
    border-right: 0;
    padding: 7px 8px 0 7px;
}
fieldset {
    align-self: stretch;
    min-width: 0;
    border: 1px solid #a8a8a8;
    margin: 0 0 8px;
    padding: 2px 13px 0 12px;
}
legend {
    padding: 0 2px;
    margin-left: -6px;
    line-height: 14px;
}
.field {
    display: flex;
    align-items: center;
    height: 21px;
}
.field label {
    width: 91px;
}
.field i {
    width: 15px;
    font-style: normal;
}
.field input {
    flex: 1;
    min-width: 0;
    height: 18px;
    padding-left: 3px;
    border: 1px solid #a5a5a5;
    color: #aaa9a0;
}
.field select {
    width: 41px;
    height: 18px;
    margin: 0 4px;
    padding-left: 2px;
    border: 1px solid #999;
    background: linear-gradient(#111, #111) right 4px top 6px / 7px 1px no-repeat, linear-gradient(#111, #111) right 5px top 7px / 5px 2px no-repeat, linear-gradient(#111, #111) right 6px top 9px / 3px 1px no-repeat, linear-gradient(#111, #111) right 7px top 10px / 1px 1px no-repeat, linear-gradient(#dadada, #dadada) right / 16px 100% no-repeat, #fff;
}
.step {
    width: 18px;
    height: 13px;
    line-height: 10px;
    border: 1px solid #777;
    border-radius: 5px;
    background-color: #fafafa;
}
.wide-button {
    width: 196px;
    height: 24px;
    flex: none;
    margin-bottom: 7px;
    border: 1px solid #888;
    border-radius: 4px;
    background: linear-gradient(#fff, #dcdcdc);
}
.side-tabs {
    flex: none;
    height: 24px;
    display: flex;
    align-items: flex-start;
    background: linear-gradient(#555, #666 60%, #4a4a4a);
}
.side-tabs button {
    width: 64px;
    height: 20px;
    margin-top: 1px;
    line-height: 18px;
    font-size: 13px;
    color: #ccc;
}
.side-tabs button.on {
    width: 49px;
    color: #333;
    background: linear-gradient(#eee, #fff);
    border-radius: 0 0 2px 2px;
}
.side-tabs button:last-child {
    width: 52px;
}

/* drawing area */
.view {
    flex: 1;
    min-width: 0;
    display: flex;
    flex-direction: column;
    padding-top: 3px;
    background-color: #c9cbca;
}
.view-frame {
    flex: 1;
    min-height: 0;
    margin: 0 4px 0 6px;
    padding: 1px;
    display: flex;
    flex-direction: column;
    border: 1px solid #555;
    background-color: #fff;
}
.drawing {
    flex: 1;
    min-height: 0;
    width: 100%;
    background-color: #000;
}
.footing path {
    fill: none;
    stroke: #eee;
}
.wall path {
    fill: none;
    stroke: #006327;
}
.mark text, .caption text {
    font-family: "Liberation Sans", "Noto Sans CJK KR", sans-serif;
    font-size: 5px;
    font-weight: bold;
    text-anchor: middle;
    fill: #fff;
}
.mark .fail {
    fill: #f00;
}
.caption text {
    font-size: 7px;
}
.caption .heading {
    font-size: 10px;
    font-weight: normal;
}
.korean {
    font-weight: bold;
}
.coords {
    flex: none;
    height: 22px;
    background: linear-gradient(#f5f3ea, #e9e6da);
    border-top: 1px solid #fff;
}
.coords span {
    display: block;
    width: 206px;
    height: 16px;
    line-height: 14px;
    padding-left: 56px;
    border-right: 1px solid #bbb;
}
.view-tabs {
    flex: none;
    height: 26px;
    margin-top: 1px;
    display: flex;
    align-items: flex-start;
    border-top: 1px solid #eee;
    filter: drop-shadow(0 1px 0 #888);
}
.scroll {
    width: 21px;
    height: 24px;
    padding-left: 8px;
}
.scroll.next {
    margin-left: auto;
}
.view-tab {
    width: 124px;
    height: 21px;
    margin-right: -12px;
    padding-left: 27px;
    display: flex;
    align-items: center;
    gap: 8px;
    color: #999;
    font-size: 13px;
    background-color: #cfcfcf;
    clip-path: polygon(0 0, 100% 0, 100% 100%, 22px 100%);
}
.view-tab.on {
    width: 101px;
    padding-left: 26px;
    gap: 6px;
    color: #222;
    background-color: #fff;
}

/* messages */
.messages {
    flex: none;
    background-color: #fff;
}
.message-title {
    height: 21px;
    display: flex;
    align-items: center;
    padding: 0 6px 0 4px;
    gap: 8px;
    background-color: #9ea09f;
    border-top: 1px solid #ccc;
}
.message-title h2 {
    flex: 1;
    color: #555;
}
.log {
    display: flex;
    height: 47px;
    background-color: #eeeff4;
}
.log pre {
    flex: 1;
    padding-left: 1px;
    font-family: "Liberation Mono", monospace;
    font-size: 10px;
    line-height: 15px;
    color: #111;
}
.v-scroll {
    width: 16px;
    display: flex;
    flex-direction: column;
    justify-content: space-between;
    align-items: center;
    background-color: #f8f8f8;
}
.v-scroll button, .h-scroll button {
    width: 16px;
    height: 16px;
    display: flex;
    align-items: center;
    justify-content: center;
    border: 1px solid #aaa;
    background-color: #f4f4f4;
}
.v-scroll span {
    width: 14px;
    height: 7px;
    margin-top: 6px;
    border: 1px solid #aaa;
    background-color: #eee;
}
.h-scroll {
    display: flex;
    height: 17px;
    background-color: #f6f6f6;
    border-top: 1px solid #bbb;
}
.track {
    flex: 1;
}
.thumb {
    width: 91%;
    height: 16px;
    display: flex;
    align-items: center;
    justify-content: center;
    border: 1px solid #aaa;
    background: linear-gradient(#f4f4f4, #d4d4d4);
}
.command {
    display: flex;
    align-items: center;
    height: 20px;
    padding-bottom: 4px;
    font-size: 15px;
}
.command input {
    flex: 1;
}
.grip-corner {
    width: 16px;
    background: radial-gradient(circle, #aaa 1px, transparent 1px) 3px 3px / 4px 4px;
    clip-path: polygon(100% 10%, 100% 100%, 10% 100%);
}
.grip-corner.dark {
    background: radial-gradient(circle, #222 1px, transparent 1px) 3px 3px / 4px 4px;
}

/* status bar */
footer {
    flex: none;
    height: 22px;
    display: flex;
    align-items: center;
    background: linear-gradient(#9b9b9b, #7a7a7a);
    border-top: 2px solid #8a8a8a;
    border-bottom: 1px solid #555;
    color: #f0f0f0;
}
footer .grip-corner {
    align-self: stretch;
}
.ready {
    flex: 1;
    padding-left: 4px;
}
.snaps {
    display: flex;
    padding: 0 4px 0 1px;
    height: 19px;
    background-color: #ddd;
    border-left: 2px solid #444;
}
.snaps button {
    width: 63px;
    height: 18px;
    line-height: 15px;
    color: #111;
    border: 1px solid #555;
    border-radius: 5px;
    background: linear-gradient(#fff, #ddd);
}
.snaps button:nth-child(-n+2) {
    width: 66px;
}
footer output {
    width: 158px;
    padding-left: 4px;
    font-size: 13px;
}
.pages {
    display: flex;
    align-items: center;
    height: 18px;
    padding: 0 10px 0 5px;
    border-left: 2px solid #444;
    background-color: #ececec;
    color: #aaa;
}
.pages .blank {
    width: 18px;
    height: 17px;
    margin-right: 4px;
    border: 1px solid #ccc;
    border-radius: 5px;
}
.pages input {
    width: 18px;
    height: 17px;
    text-align: center;
    border: 1px solid #ddd;
    color: #b5b3a8;
}
.spin {
    width: 17px;
    height: 16px;
    padding-left: 4px;
    background-color: #fafafa;
    border: 1px solid #ccc;
}
.spin svg {
    display: block;
}
.pages b {
    padding: 0 7px 0 5px;
    font-weight: normal;
}
```
